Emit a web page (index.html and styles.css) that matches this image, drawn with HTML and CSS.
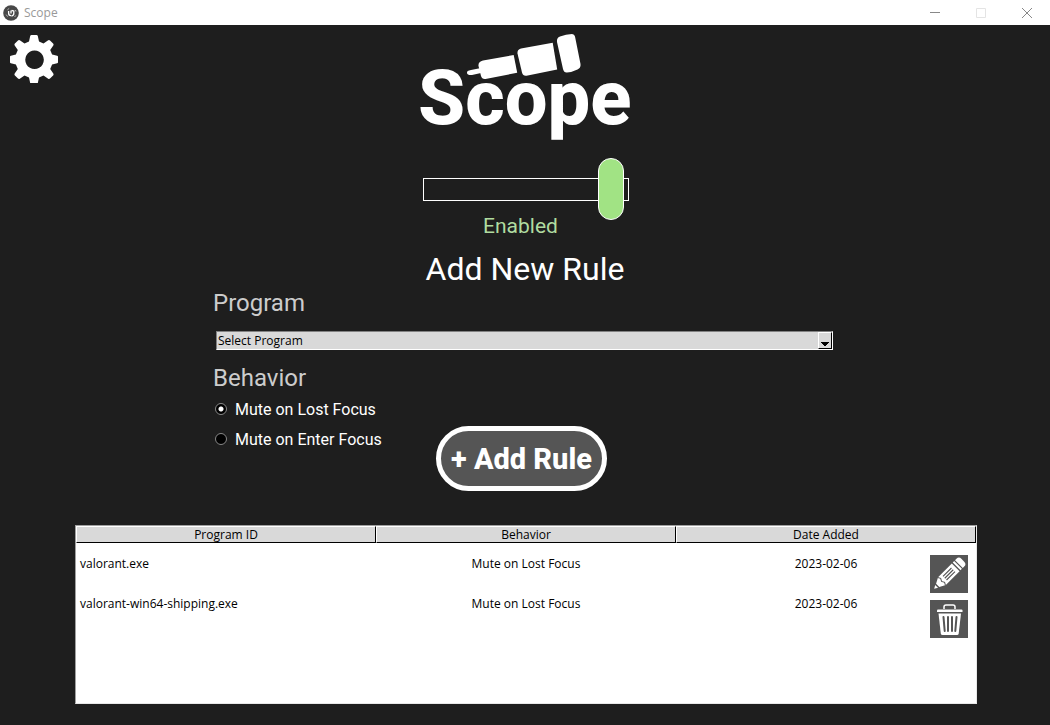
FILE: index.html
```html
<!DOCTYPE html>
<html lang="en">
<head>
<meta charset="utf-8">
<meta name="viewport" content="width=device-width, initial-scale=1">
<title>Scope</title>
<link rel="stylesheet" href="styles.css">
</head>
<body>
<header class="titlebar">
  <svg class="app-icon" viewBox="0 0 16 16" aria-hidden="true">
    <circle cx="8" cy="8" r="7.8" fill="#484848"/>
    <path d="M5.600 6v2q0 2.600 2.400 2.600M8 5.600v3M8.600 5.400l2.200.6v2.600q0 2-2.400 2.400" fill="none" stroke="#fff" stroke-width="1.300"/>
    <path d="M4.400 4.800l1.800-1.400M3.200 9.600l1.400 2M12.400 5l.6 1.600M11.600 12l1.200-1.600" fill="none" stroke="#bbb" stroke-width=".9"/>
  </svg>
  <span class="app-name">Scope</span>
  <div class="window-controls">
    <button type="button" aria-label="Minimize"><svg viewBox="0 0 12 12"><path d="M1 5.500h10" stroke="#888"/></svg></button>
    <button type="button" aria-label="Maximize" disabled><svg viewBox="0 0 12 12"><path d="M1.500 1.500h9v9h-9z" fill="none" stroke="#e4e4e4"/></svg></button>
    <button type="button" aria-label="Close"><svg viewBox="0 0 12 12"><path d="M1 1l10 10M11 1L1 11" stroke="#888"/></svg></button>
  </div>
</header>
<main class="app">
  <div class="masthead">
    <button type="button" class="settings" aria-label="Settings">
      <svg viewBox="0 0 48 48"><path fill="#fff" fill-rule="evenodd" d="M21.500 0h5q1 0 1.300 1l1.200 5.500 4.500 1.900 4.700-3.100q1-.6 1.800.2l3.100 3.100q.8.800.2 1.800l-3.100 4.700 1.900 4.500 5 1.100q1 .2 1 1.300v5q0 1-1 1.300l-5 1.100-1.900 4.500 3.100 4.700q.6 1-.2 1.800l-3.100 3.100q-.8.800-1.800.2l-4.700-3.100-4.500 1.900-1.200 5.500q-.3 1-1.300 1h-5q-1 0-1.300-1l-1.200-5.500-4.500-1.900-4.700 3.100q-1 .6-1.800-.2l-3.100-3.100q-.8-.8-.2-1.800l3.100-4.700-1.900-4.500-5-1.100q-1-.3-1-1.300v-5q0-1.100 1-1.300l5-1.100 1.900-4.500-3.100-4.700q-.6-1 .2-1.800l3.100-3.100q.8-.8 1.800-.2l4.700 3.100 4.500-1.900 1.200-5.500q.3-1 1.300-1zM24.500 15.500a9.300 9.300 0 1 0 .1 0z"/></svg>
    </button>
    <svg class="logo" viewBox="0 0 220 120" role="img" aria-label="Scope">
      <text x="3" y="94" class="logo-text">Scope</text>
      <g fill="#fff">
        <path d="M56 40l10-2v5l-9 2q-4.500.5-5-2t4-3z"/>
        <path d="M68 30.500L98.700 25l3.500 17.700L70.500 49q-3.500.5-4.500-3l-2.500-10q-.5-4.500 4.500-5.500z"/>
        <path d="M106 18.500L137.700 12.700l4.500 26.800-30.700 6.200q-3.500.5-4.500-3.200l-4.500-19q-.5-4 3.500-5z"/>
        <path d="M145 6.500q6-2.500 12-2.500 2.500 0 3 2.500l5.500 27.500q.5 4-3 5.500-5 2.500-10.500 3-3 .3-4-3.500l-6-27q-.5-4.500 3-5.500z"/>
      </g>
    </svg>
  </div>

  <div class="power">
    <input type="range" id="power" class="power-switch" min="0" max="1" value="1">
    <label for="power" class="power-label">Enabled</label>
  </div>

  <h1 class="form-title">Add New Rule</h1>
  <form class="rule-form">
    <label for="program" class="group-title">Program</label>
    <div class="program-box">
      <select id="program" class="program-select"><option>Select Program</option></select>
      <svg class="drop-arrow" viewBox="0 0 12 15" aria-hidden="true"><path d="M2 9h8v1H9v1H8v1H7v1H5v-1H4v-1H3v-1H2z"/></svg>
    </div>
    <div class="behavior-row">
      <fieldset class="behavior">
        <legend class="group-title">Behavior</legend>
        <div class="choices">
          <label class="choice"><input type="radio" name="behavior" checked>Mute on Lost Focus</label>
          <label class="choice"><input type="radio" name="behavior">Mute on Enter Focus</label>
        </div>
      </fieldset>
      <button type="button" class="add-rule">+ Add Rule</button>
    </div>
  </form>

  <section class="rules" aria-label="Rules">
    <table class="rules-table">
      <thead><tr><th>Program ID</th><th>Behavior</th><th>Date Added</th></tr></thead>
      <tbody>
        <tr><td>valorant.exe</td><td>Mute on Lost Focus</td><td>2023-02-06</td></tr>
        <tr><td>valorant-win64-shipping.exe</td><td>Mute on Lost Focus</td><td>2023-02-06</td></tr>
      </tbody>
    </table>
    <div class="row-actions">
      <button type="button" aria-label="Edit rule">
        <svg viewBox="0 0 38 38"><g transform="rotate(45 19 19)">
          <path fill="#fff" d="M13.500 5V3q0-3.500 3.500-3.500h4q3.500 0 3.500 3.500v2zM13.500 6.200h11v2h-11zM13.500 9.500h11V29l-3.200 6h-4.600l-3.200-6zM17 36.500h4L19 40z"/>
          <path d="M16.500 13v12M21.500 13v12M19 13v12" fill="none" stroke="#555" stroke-width="1.100"/>
          <path d="M13.500 29.500l2.700-1.500 2.800 1.500 2.800-1.500 2.700 1.500" fill="none" stroke="#555"/>
        </g></svg>
      </button>
      <button type="button" aria-label="Delete rule">
        <svg viewBox="0 0 38 38" fill="none" stroke="#fff"><path d="M14 9V7q0-2 2-2h7q2 0 2 2v2" stroke-width="1.500"/><path d="M8 9.500h23.500q1 0 1 1V12H7v-1.500q0-1 1-1z" fill="#fff" stroke="none"/><path fill="#fff" stroke="none" d="M8.500 13.500H31l-2.300 20q-.2 1.500-1.700 1.500H12.500q-1.500 0-1.700-1.500z"/><path stroke="#555" stroke-width="2" stroke-linecap="round" d="M13.500 17l1.200 14M18 17v14M22 17v14M26.500 17l-1.200 14"/></svg>
      </button>
    </div>
  </section>
</main>
</body>
</html>
```
FILE: styles.css
```css
* { box-sizing: border-box; }
body {
  margin: 0;
  min-height: 100vh;
  display: flex;
  flex-direction: column;
  background: #1e1e1e;
  color: #fff;
  font-family: Roboto, sans-serif;
}
button { margin: 0; padding: 0; border: 0; background: none; }
svg { display: block; }

.titlebar {
  display: flex;
  align-items: center;
  height: 25px;
  padding-left: 3px;
  background: #fff;
  color: #999;
  font: 12px "Open Sans", sans-serif;
}
.app-icon { width: 16px; height: 16px; }
.app-name { flex: 1; padding-left: 5px; }
.window-controls { display: flex; height: 100%; }
.window-controls button { display: grid; place-items: center; width: 46px; }
.window-controls svg { width: 12px; height: 12px; }

.app { display: flex; flex-direction: column; align-items: center; padding-bottom: 21px; }
.masthead {
  display: grid;
  grid-template-columns: 1fr auto 1fr;
  align-self: stretch;
  padding: 5px 10px 0;
}
.settings { width: 48px; height: 48px; margin-top: 5px; }
.logo { width: 220px; height: 120px; }
.logo-text { fill: #fff; font: 800 76px Roboto, sans-serif; }

.power { display: flex; flex-direction: column; align-items: center; margin-top: 28px; }
.power-switch {
  appearance: none;
  width: 206px;
  height: 23px;
  margin: 0 0 0 2px;
  padding: 0 4px;
  border: 1px solid #fff;
  background: transparent;
}
.power-switch::-webkit-slider-runnable-track { height: 21px; }
.power-switch::-webkit-slider-thumb {
  appearance: none;
  width: 26px;
  height: 62px;
  margin-top: -21px;
  border: 1px solid #fff;
  border-radius: 13px;
  background: #a1e384;
}
.power-label { margin-top: 13px; padding-right: 9px; color: #b0dca0; font-size: 21px; line-height: 24px; }

.form-title { margin: 12px 0 0; font-size: 32px; font-weight: 400; line-height: 38px; }
.rule-form { width: min(620px, 90%); margin-right: 4px; }
.group-title { display: block; padding: 0; color: #ccc; font-size: 24px; line-height: 30px; }
.program-box { position: relative; margin: 13px 0 13px 3px; }
.program-select {
  display: block;
  appearance: none;
  width: 100%;
  height: 19px;
  padding: 0 0 0 1px;
  border: 1px solid #fff;
  border-top-color: #828282;
  border-left-color: #828282;
  border-radius: 0;
  background: #d9d9d9;
  color: #000;
  font: 12px "Open Sans", sans-serif;
}
.drop-arrow {
  position: absolute;
  top: 1px;
  right: 1px;
  width: 14px;
  height: 17px;
  border: 1px solid #000;
  border-top-color: #fff;
  border-left-color: #fff;
  pointer-events: none;
}
.behavior-row { display: grid; grid-template-columns: 1fr auto 1fr; align-items: end; margin-right: 3px; }
.behavior { margin: 0; padding: 0; border: 0; }
.choices { padding: 1px 0 37px; }
.choice { display: flex; align-items: center; gap: 8px; height: 30px; padding-left: 2px; font-size: 16px; }
.choice input {
  appearance: none;
  width: 12px;
  height: 12px;
  margin: 0;
  border: 1px solid #888;
  border-radius: 50%;
  background: #000;
}
.choice input:checked { background: radial-gradient(circle, #fff 2px, #000 3px); }
.add-rule {
  height: 65px;
  padding: 0 10px;
  border: 5px solid #fff;
  border-radius: 33px;
  background: #555;
  color: #fff;
  font: 800 29px Roboto, sans-serif;
}

.rules {
  position: relative;
  width: min(902px, 96%);
  min-height: 179px;
  margin: 34px 0 0 2px;
  border: 1px solid #e8e8e8;
  border-top-color: #a0a0a0;
  border-left-color: #a0a0a0;
  background: #fff;
  color: #000;
}
.rules-table {
  width: 100%;
  table-layout: fixed;
  border-collapse: separate;
  border-spacing: 0;
  font: 12px "Open Sans", sans-serif;
  text-align: center;
}
.rules-table th {
  height: 17px;
  padding: 0;
  border: 1px solid #000;
  border-top-color: #fff;
  border-left-color: #fff;
  background: #d9d9d9;
  font-weight: 400;
  line-height: 15px;
}
.rules-table td { height: 40px; padding: 0 4px; }
.rules-table td:first-child { text-align: left; }
.row-actions { position: absolute; top: 29px; right: 8px; display: grid; gap: 7px; }
.row-actions button { width: 38px; height: 38px; background: #555; }
```
